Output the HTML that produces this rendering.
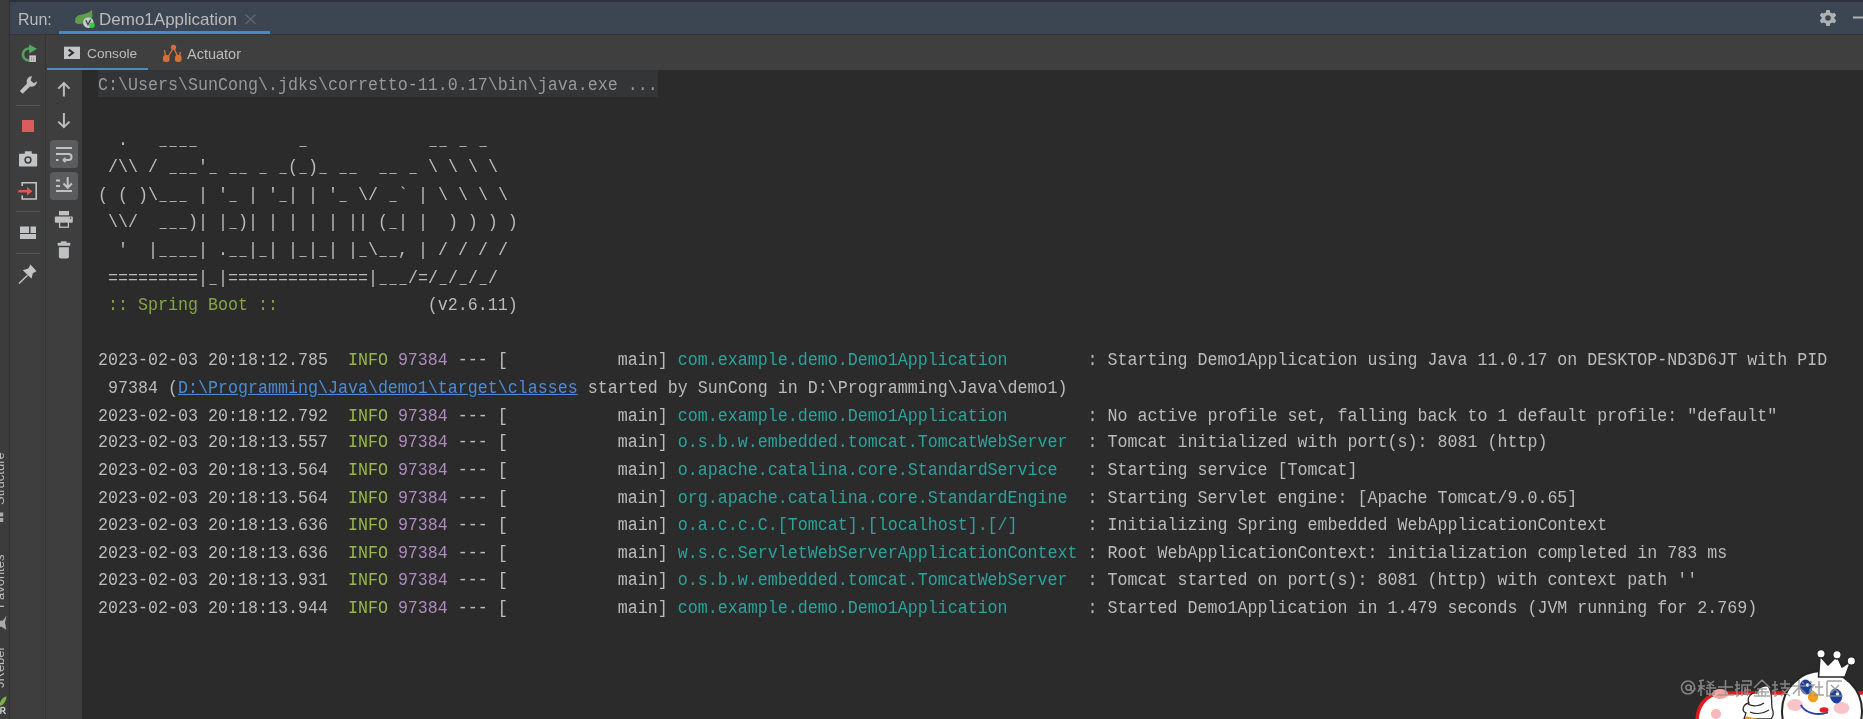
<!DOCTYPE html>
<html><head><meta charset="utf-8">
<style>
*{margin:0;padding:0;box-sizing:border-box}
html,body{width:1863px;height:719px;overflow:hidden;background:#2b2b2b;font-family:"Liberation Sans",sans-serif}
.abs{position:absolute}
#runlbl,#tabname,#contab,#acttab,.vt{will-change:transform}
#strip{left:0;top:0;width:9px;height:719px;background:#3c3c3d}
#stripline{left:9px;top:0;width:1px;height:719px;background:#2f3031}
#hdr{left:10px;top:0;width:1853px;height:34px;background:#3c4653}
#hdrtop{left:10px;top:0;width:1853px;height:1.5px;background:#2c323a}
#hdrbot{left:10px;top:34px;width:1853px;height:1px;background:#323639}
#row2{left:10px;top:35px;width:1853px;height:35px;background:#3f3f40}
#tb1{left:10px;top:35px;width:35px;height:684px;background:#3e3e3f}
#tb1line{left:45px;top:35px;width:1px;height:684px;background:#323436}
#tb2{left:46px;top:70px;width:36px;height:649px;background:#3e3e3f}
#console{left:82px;top:70px;width:1781px;height:649px;background:#2b2b2b}
.t{color:#bbbbbb;font-size:16px;white-space:pre}
#runlbl{left:18px;top:11px;color:#bbbbbb;font-size:16px}
#tabname{left:99px;top:10px;color:#bbbbbb;font-size:17px}
#tabul{left:59px;top:30.5px;width:211px;height:3.5px;background:#4a88c7}
#conul{left:47px;top:68px;width:101px;height:2px;background:#4a88c7}
#contab{left:87px;top:46.3px;color:#bbbbbb;font-size:13.7px}
#acttab{left:187px;top:46px;color:#bbbbbb;font-size:14.5px}
pre{position:absolute;left:98px;top:71.5px;font-family:"Liberation Mono",monospace;font-size:16.667px;line-height:24.793px;color:#bbbbbb;transform:scaleY(1.11);transform-origin:0 0;will-change:transform}
.cmd{color:#989898}
.u{font-style:normal;display:inline-block;transform:scaleX(0.72)}
#cmdbg{left:98px;top:70px;width:560px;height:27px;background:#343536}
.sb{color:#86a545}
.in{color:#98b84a}
.pid{color:#ae8abe}
.lg{color:#2aa39b}
.lk{color:#4a8bd8;text-decoration:underline}
.vt{left:-8.3px;font-size:13px;color:#bbbbbb;transform:rotate(-90deg);transform-origin:0 0;white-space:nowrap;line-height:15px}
</style></head><body>
<div id="strip" class="abs"></div>
<div id="stripline" class="abs"></div>
<div id="hdr" class="abs"></div>
<div id="hdrtop" class="abs"></div>
<div id="hdrbot" class="abs"></div>
<div id="row2" class="abs"></div>
<div id="tb1" class="abs"></div>
<div id="tb1line" class="abs"></div>
<div id="tb2" class="abs"></div>
<div id="console" class="abs"></div>
<svg class="abs" style="left:0;top:0" width="1863" height="719" viewBox="0 0 1863 719">
<!-- separators toolbar1 -->
<rect x="16" y="105" width="24" height="1" fill="#545556"/>
<rect x="16" y="211" width="24" height="1" fill="#545556"/>
<rect x="16" y="253" width="24" height="1" fill="#545556"/>
<!-- tab icon: spring leaf + gear + dot -->
<path d="M75 22.5 L75.5 18 L78 15.5 L84 14 L88.5 12.5 L92 10 L92.5 17 L89 20 L84 23.5 L78 24 Z" fill="#5f9e4a"/>
<circle cx="88.3" cy="22.6" r="5.3" fill="#c5cad1"/>
<path d="M85.8 20.3 L88 24.5 L90.6 19.6" fill="none" stroke="#3a4350" stroke-width="1.3"/>
<circle cx="92" cy="25.2" r="2.7" fill="#3ccb3c"/>
<!-- close x -->
<path d="M245.5 14.5 L255.5 24 M255.5 14.5 L245.5 24" stroke="#5f6a76" stroke-width="1.2"/>
<!-- gear -->
<g transform="translate(1828 18)" fill="#afb1b3">
<path d="M-1.6 -8 H1.6 L2.2 -5.6 L4.3 -4.4 L6.6 -5.2 L8.2 -2.4 L6.4 -0.8 V0.8 L8.2 2.4 L6.6 5.2 L4.3 4.4 L2.2 5.6 L1.6 8 H-1.6 L-2.2 5.6 L-4.3 4.4 L-6.6 5.2 L-8.2 2.4 L-6.4 0.8 V-0.8 L-8.2 -2.4 L-6.6 -5.2 L-4.3 -4.4 L-2.2 -5.6 Z"/>
<circle r="2.8" fill="#3c4653"/>
</g>
<rect x="1853" y="16.5" width="10" height="2" fill="#afb1b3"/>
<!-- console tab icon -->
<rect x="64" y="46.7" width="16" height="12.3" fill="#c2c4c6"/>
<path d="M68.6 49.6 L73 52.8 L68.6 56" fill="none" stroke="#2b2b2b" stroke-width="2"/>
<!-- actuator icon -->
<g fill="#d5703a" stroke="#d5703a">
<circle cx="173.5" cy="47.3" r="2.6" stroke="none"/>
<path d="M173 48.5 L168 57 M174 48.5 L177.5 56" fill="none" stroke-width="1.4"/>
<path d="M164.5 50 L165.5 56 M180.5 52 L179.5 56" fill="none" stroke-width="1.4"/>
<rect x="163" y="55" width="6.5" height="7" rx="2.5" stroke="none"/>
<rect x="175" y="55" width="6.5" height="7" rx="2.5" stroke="none"/>
</g>
<!-- rerun -->
<path d="M30 48.6 A6 6 0 1 0 29 60.5" fill="none" stroke="#52a05e" stroke-width="2.6"/>
<path d="M29.2 44.4 L37 48.8 L29.2 53.4 Z" fill="#55a864"/>
<rect x="29.3" y="55.4" width="6.6" height="6.6" fill="#c9c9c9"/>
<path d="M31.6 57 V61.5 M33.7 57 V61.5" stroke="#8a8a8a" stroke-width="0.7"/>
<!-- wrench -->
<g fill="#bdbfc1">
<path d="M19.8 91 L27 83.5 L30 86.5 L22.7 93.8 Z"/>
<path d="M32 76.3 A5.2 5.2 0 1 0 37 81.3 L33.8 83.3 L30.6 80.3 Z"/>
</g>
<!-- stop -->
<rect x="22" y="120" width="12" height="12" fill="#db5c5c"/>
<!-- camera -->
<g fill="#c2c3c4">
<rect x="19" y="153.8" width="18.2" height="12.8" rx="0.8"/>
<rect x="24.8" y="151.3" width="7" height="3"/>
</g>
<circle cx="28" cy="160" r="2.9" fill="none" stroke="#3e3e3f" stroke-width="1.5"/>
<!-- exit icon -->
<path d="M22.2 186 V182.8 H36.2 V199 H22.2 V195.5" fill="none" stroke="#c2c3c4" stroke-width="1.6"/>
<path d="M18.4 190 H27 V187 L32.4 191.3 L27 195.6 V192.6 H18.4 Z" fill="#e05555"/>
<!-- layout -->
<g fill="#c2c3c4">
<rect x="20" y="226.5" width="9" height="6.5"/>
<rect x="30.5" y="226.5" width="5.5" height="6.5"/>
<rect x="20" y="234" width="16" height="5"/>
</g>
<!-- pin -->
<path d="M30.5 264.5 L36.5 271.3 L32.8 273.2 L31.5 278.8 L22.8 270.3 L28.3 268.5 Z" fill="#c2c3c4"/>
<path d="M19 283.5 L27.5 275.3" stroke="#c2c3c4" stroke-width="1.5"/>
<!-- up/down arrows -->
<g fill="none" stroke="#b9bbbd" stroke-width="2">
<path d="M63.9 83 V96.5 M58.3 88.6 L63.9 83 L69.5 88.6"/>
<path d="M63.9 113 V127 M58.3 121.6 L63.9 127.2 L69.5 121.6"/>
</g>
<!-- wrap button -->
<rect x="50" y="140" width="28" height="28" rx="3.5" fill="#5b5c5e"/>
<g fill="none" stroke="#c0c2c4" stroke-width="2">
<path d="M56 148 H72"/>
<path d="M56 154 H68.5 A3 3 0 0 1 68.5 160 H63.5"/>
<path d="M56 160 H58.5"/>
<path d="M65.5 157.8 L63.2 160 L65.5 162.2" stroke-width="1.6"/>
</g>
<!-- scroll to end button -->
<rect x="50" y="172" width="28" height="28" rx="3.5" fill="#5b5c5e"/>
<g fill="none" stroke="#c0c2c4" stroke-width="2">
<path d="M56 180.5 H60 M56 186 H60 M56 191 H72"/>
<path d="M67.7 177 V188 M63.5 183.5 L67.7 187.8 L71.9 183.5"/>
</g>
<!-- printer -->
<g fill="#bfc0c1">
<rect x="59" y="211" width="10" height="4.3"/>
<rect x="54.8" y="216.5" width="18" height="6.3" rx="1"/>
</g>
<rect x="59.6" y="222" width="8.8" height="5.2" fill="#3e3e3f" stroke="#bfc0c1" stroke-width="1.3"/>
<circle cx="70.6" cy="218.2" r="0.8" fill="#3e3e3f"/>
<!-- trash -->
<g fill="#bfc0c1">
<rect x="57.7" y="242.8" width="12.5" height="2.9" rx="0.5"/>
<rect x="61" y="241.3" width="5.5" height="2"/>
<path d="M58.9 247.3 H68.9 V256.8 A1.8 1.8 0 0 1 67.1 258.6 H60.7 A1.8 1.8 0 0 1 58.9 256.8 Z"/>
</g>
<!-- left strip icons -->
<rect x="0" y="512.5" width="3.2" height="4" fill="#a9abad"/>
<rect x="0" y="518" width="3.2" height="4" fill="#a9abad"/>
<path d="M-2 621 L3 620.5 L6.5 615.8 L5 622.5 L6.3 629.8 L1 626.5 L-2 628 Z" fill="#a9abad"/>
<path d="M-1 706 C0 700.5 3 697 6.5 696.3 C6 701 4 705.5 -1 706 Z" fill="#7fb043"/>
<path d="M0.5 707.5 H3 C5.5 707.5 5.5 710.8 3 710.8 H0.5 M3 710.8 L5.5 714 M0.8 707.5 V714" fill="none" stroke="#c8cacc" stroke-width="1.3"/>
</svg>

<div id="runlbl" class="abs">Run:</div>
<div id="tabname" class="abs">Demo1Application</div>
<div id="tabul" class="abs"></div>
<div id="conul" class="abs"></div>
<div id="contab" class="abs">Console</div>
<div id="acttab" class="abs">Actuator</div>
<div id="cmdbg" class="abs"></div>
<svg class="abs" style="left:1660px;top:640px" width="203" height="79" viewBox="1660 640 203 79">
<!-- red/white banner -->
<path d="M1697 722 C1697 708 1704 694 1722 693 L1866 693 L1866 722 Z" fill="#ffffff" stroke="#e21b1b" stroke-width="3.5"/>
<ellipse cx="1720" cy="694" rx="8" ry="5" fill="#f4a3a3"/>
<ellipse cx="1716" cy="714" rx="5" ry="5" fill="#f6b8b8"/>
<!-- ice cream -->
<path d="M1744 719 L1746 713 C1741 711 1743 704 1749 703 C1746 697 1752 692 1757 693 C1757 689 1762 685 1768 686 C1773 692 1771 700 1772 708 C1774 713 1773 717 1771 719 Z" fill="#ffffff" stroke="#2a2a2a" stroke-width="1.3"/>
<path d="M1748 704 C1753 707 1760 706 1764 703 M1750 712 C1756 715 1764 713 1769 710" fill="none" stroke="#2a2a2a" stroke-width="1.2"/>
<path d="M1745 716 L1758 719 L1745 719 Z" fill="#e89a2c"/>
<!-- face -->
<circle cx="1822" cy="711" r="40" fill="#ffffff" stroke="#262626" stroke-width="2"/>
<!-- crown -->
<path d="M1818.5 677 L1820 656 L1828 665 L1837 656 L1842 667 L1851 661 L1845 677 Z" fill="#ffffff" stroke="#262626" stroke-width="1.6" stroke-linejoin="round"/>
<circle cx="1821" cy="653.7" r="4.2" fill="#fff" stroke="#262626" stroke-width="1.4"/>
<circle cx="1837" cy="654.8" r="4.2" fill="#fff" stroke="#262626" stroke-width="1.4"/>
<circle cx="1851.3" cy="660.9" r="4.2" fill="#fff" stroke="#262626" stroke-width="1.4"/>
<!-- cheeks -->
<ellipse cx="1795" cy="705" rx="8" ry="6" fill="#f8c4c8"/>
<ellipse cx="1841.5" cy="708" rx="8" ry="6" fill="#f8c4c8"/>
<!-- eyes -->
<ellipse cx="1806" cy="687" rx="6" ry="7.5" fill="#1f3f9c" transform="rotate(-15 1806 687)"/>
<ellipse cx="1836" cy="696" rx="6" ry="7.5" fill="#1f3f9c" transform="rotate(-15 1836 696)"/>
<circle cx="1807.5" cy="685" r="1.8" fill="#fff"/>
<circle cx="1837.5" cy="694" r="1.8" fill="#fff"/>
<!-- nose -->
<circle cx="1813" cy="697" r="5.2" fill="#f0a020"/>
<!-- mouth -->
<path d="M1800.8 704.8 C1805 713 1817 716 1828 712.5" fill="none" stroke="#2a3fa8" stroke-width="1.8"/>
<ellipse cx="1824" cy="710" rx="4.5" ry="2.8" fill="#e02020"/>
<!-- watermark -->
<g fill="none" stroke="#959595" stroke-width="1.5" opacity="0.85">
<circle cx="1688" cy="687.5" r="6.5"/>
<circle cx="1688.5" cy="687.5" r="2.6"/>
<path d="M1691 685 V690 C1692 692 1695 691 1695 688"/>
<!-- chars approx -->
<path d="M1699 681 L1704 680 M1701 680 V696 M1698 686 H1705 M1701 686 L1698 692 M1701 687 L1705 690 M1707 681 L1714 686 M1714 681 L1707 686 M1706 688 H1716 M1710 684 V696 M1707 690 V694 H1714 V690"/>
<path d="M1718 687 H1733 M1725.5 680 V695 M1717 695 H1734"/>
<path d="M1737 681 V696 L1739 695 M1735 685 H1740 M1735 690 L1740 688 M1742 681 H1751 V685 H1742 V696 M1745 687 V694 H1750 M1747.5 686 V696 M1744 690 H1751"/>
<path d="M1762 680 L1754 688 M1762 680 L1770 688 M1757 689 H1767 M1762 689 V696 M1755 692 H1769 M1754 696 H1770 M1758 693 L1759 695 M1766 693 L1765 695"/>
<path d="M1775 681 V696 L1777 695 M1772 685 H1778 M1772 691 L1778 689 M1780 684 H1790 M1785 680 V688 M1781 688 H1789 L1781 696 M1782 690 L1790 696"/>
<path d="M1792 686 H1806 M1799 680 V696 M1799 687 L1793 694 M1799 687 L1806 694 M1802 682 L1804 684"/>
<path d="M1810 681 L1812 683 M1808 685 H1814 L1810 690 V696 M1810 690 L1814 692 M1819 681 V695 M1815 687 H1823 M1814 695 H1824"/>
<path d="M1827 681 H1842 M1827 681 V696 H1843 M1831 685 L1839 693 M1839 685 L1831 693"/>
</g>
</svg>

<div class="vt abs" style="top:505px">Structure</div>
<div class="vt abs" style="top:608px">Favorites</div>
<div class="vt abs" style="top:687.5px">JRebel</div>
<pre><span class="cmd">C:\Users\SunCong\.jdks\corretto-11.0.17\bin\java.exe ...</span>

  .   <i class="u">_</i><i class="u">_</i><i class="u">_</i><i class="u">_</i>          <i class="u">_</i>            <i class="u">_</i><i class="u">_</i> <i class="u">_</i> <i class="u">_</i>
 /\\ / <i class="u">_</i><i class="u">_</i><i class="u">_</i>'<i class="u">_</i> <i class="u">_</i><i class="u">_</i> <i class="u">_</i> <i class="u">_</i>(<i class="u">_</i>)<i class="u">_</i> <i class="u">_</i><i class="u">_</i>  <i class="u">_</i><i class="u">_</i> <i class="u">_</i> \ \ \ \
( ( )\<i class="u">_</i><i class="u">_</i><i class="u">_</i> | '<i class="u">_</i> | '<i class="u">_</i>| | '<i class="u">_</i> \/ <i class="u">_</i>` | \ \ \ \
 \\/  <i class="u">_</i><i class="u">_</i><i class="u">_</i>)| |<i class="u">_</i>)| | | | | || (<i class="u">_</i>| |  ) ) ) )
  '  |<i class="u">_</i><i class="u">_</i><i class="u">_</i><i class="u">_</i>| .<i class="u">_</i><i class="u">_</i>|<i class="u">_</i>| |<i class="u">_</i>|<i class="u">_</i>| |<i class="u">_</i>\<i class="u">_</i><i class="u">_</i>, | / / / /
 =========|<i class="u">_</i>|==============|<i class="u">_</i><i class="u">_</i><i class="u">_</i>/=/<i class="u">_</i>/<i class="u">_</i>/<i class="u">_</i>/
 <span class="sb">:: Spring Boot ::</span>               (v2.6.11)

2023-02-03 20:18:12.785  <span class="in">INFO</span> <span class="pid">97384</span> --- [           main] <span class="lg">com.example.demo.Demo1Application       </span> : Starting Demo1Application using Java 11.0.17 on DESKTOP-ND3D6JT with PID
 97384 (<span class="lk">D:\Programming\Java\demo1\target\classes</span> started by SunCong in D:\Programming\Java\demo1)
2023-02-03 20:18:12.792  <span class="in">INFO</span> <span class="pid">97384</span> --- [           main] <span class="lg">com.example.demo.Demo1Application       </span> : No active profile set, falling back to 1 default profile: "default"
2023-02-03 20:18:13.557  <span class="in">INFO</span> <span class="pid">97384</span> --- [           main] <span class="lg">o.s.b.w.embedded.tomcat.TomcatWebServer </span> : Tomcat initialized with port(s): 8081 (http)
2023-02-03 20:18:13.564  <span class="in">INFO</span> <span class="pid">97384</span> --- [           main] <span class="lg">o.apache.catalina.core.StandardService  </span> : Starting service [Tomcat]
2023-02-03 20:18:13.564  <span class="in">INFO</span> <span class="pid">97384</span> --- [           main] <span class="lg">org.apache.catalina.core.StandardEngine </span> : Starting Servlet engine: [Apache Tomcat/9.0.65]
2023-02-03 20:18:13.636  <span class="in">INFO</span> <span class="pid">97384</span> --- [           main] <span class="lg">o.a.c.c.C.[Tomcat].[localhost].[/]      </span> : Initializing Spring embedded WebApplicationContext
2023-02-03 20:18:13.636  <span class="in">INFO</span> <span class="pid">97384</span> --- [           main] <span class="lg">w.s.c.ServletWebServerApplicationContext</span> : Root WebApplicationContext: initialization completed in 783 ms
2023-02-03 20:18:13.931  <span class="in">INFO</span> <span class="pid">97384</span> --- [           main] <span class="lg">o.s.b.w.embedded.tomcat.TomcatWebServer </span> : Tomcat started on port(s): 8081 (http) with context path ''
2023-02-03 20:18:13.944  <span class="in">INFO</span> <span class="pid">97384</span> --- [           main] <span class="lg">com.example.demo.Demo1Application       </span> : Started Demo1Application in 1.479 seconds (JVM running for 2.769)</pre>
</body></html>
